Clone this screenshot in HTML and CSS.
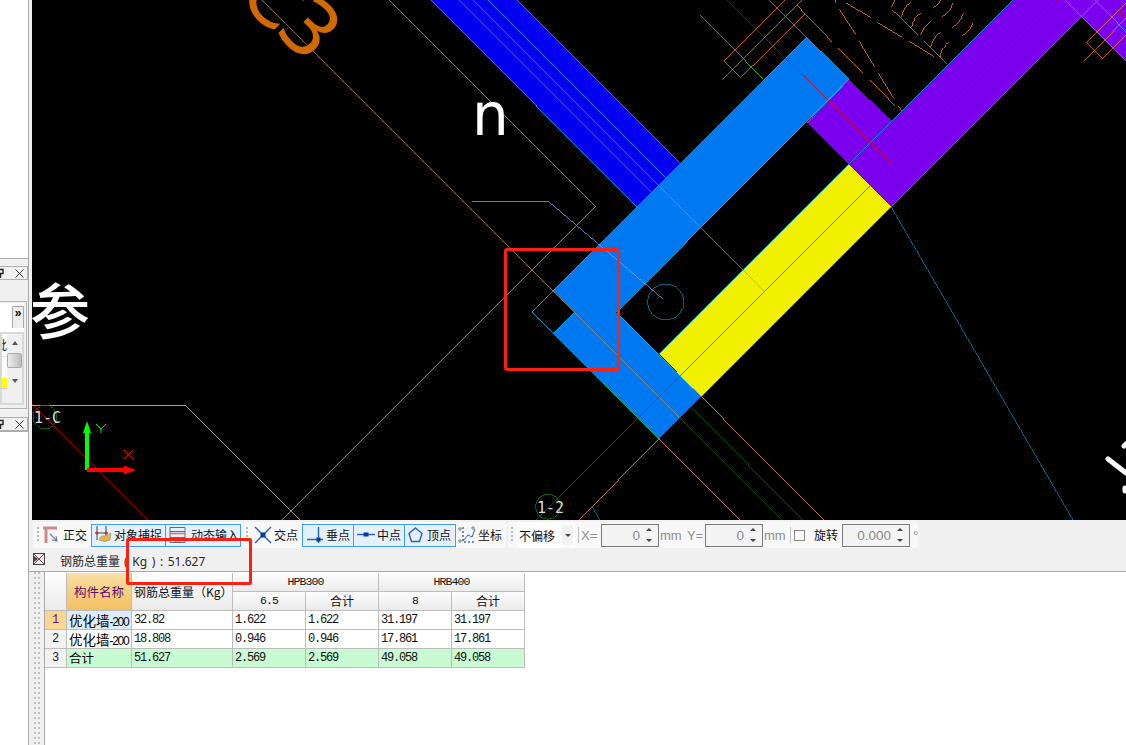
FILE: index.html
```html
<!DOCTYPE html>
<html lang="zh">
<head>
<meta charset="utf-8">
<title>钢筋总重量</title>
<link rel="stylesheet" href="styles.css">
</head>
<body>
<div class="app">
  <aside class="dock">
    <div class="pane-top"></div>
    <div class="dock-title first">
      <svg class="pin" width="6" height="10" viewBox="0 0 6 10"><path class="pin-s" d="M0 1.5H5V5.5H0M2.5 5.5V10M0 5.5H5"/></svg>
      <svg class="close" width="9" height="9" viewBox="0 0 9 9"><path class="close-s" d="M.5.5L8.5 8.5M8.5.5L.5 8.5"/></svg>
    </div>
    <div class="props">
      <div class="props-head"><div class="more">»</div></div>
      <div class="props-body">
        <div class="cells">
          <div class="cell cell-text">批</div>
          <div class="cell cell-blank"></div>
          <div class="cell cell-yellow"></div>
          <div class="cell cell-grey"></div>
        </div>
        <div class="scroll">
          <span class="arrow-up"></span>
          <span class="thumb"></span>
          <span class="arrow-down"></span>
        </div>
      </div>
    </div>
    <div class="dock-title second">
      <svg class="pin" width="6" height="10" viewBox="0 0 6 10"><path class="pin-s" d="M0 1.5H5V5.5H0M2.5 5.5V10M0 5.5H5"/></svg>
      <svg class="close" width="9" height="9" viewBox="0 0 9 9"><path class="close-s" d="M.5.5L8.5 8.5M8.5.5L.5 8.5"/></svg>
    </div>
    <div class="pane-bottom"></div>
  </aside>

  <main class="work">
    <svg class="canvas" width="1094" height="520" viewBox="32 0 1094 520">
      <g class="crisp">
        <polygon class="f-blue" points="431,0 516.7,0 680.4,163.6 637,207"/>
        <polygon class="f-azure" points="806.7,37.3 849,79.3 616.5,312.5 701.3,396.7 659,439 553.3,333.3 574.5,312 553.3,290.7"/>
        <polygon class="f-yellow" points="849,164.3 891,206.7 701.3,396.7 659.3,354"/>
        <polygon class="f-purple" points="849,79.3 891.3,121 849,164 807,122.7"/>
        <polygon class="f-purple" points="849,164 1013,0 1126,0 1126,60.7 1081,16.7 891,206.7"/>

        <path class="l-cyan" d="M431 0L637 207M458.7 0L651.4 192.7M488.3 0L666.2 177.9M516.7 0L680.4 163.6M769 0L806.7 37.3 849 79.3 620 308.6M806.7 37.3L553.3 290.7 532 312 553.3 333.3 603 383M574.5 312L553.3 333.3M620 316.5L701.3 396.7M659.3 354L1013 0M701.3 396.7L891 206.7 1098 0M849 79.3L807 122.7M1065 0L1126 60.7M1095 0L1126 31.7"/>
        <path class="l-green" d="M700 15L763.3 79"/>
        <path class="l-brightgreen" d="M603 383L659 439"/>
        <path class="l-red" d="M1056.5 0L536 520M726.7 0L891.7 163.3M32 404L148 520M1106.7 0L1126 18"/>
        <path class="l-pink" d="M389.3 0L595.7 206.7 280 522M701.3 396.7L824 520M659 439L739.6 520M659 439L579 520"/>
        <path class="l-pale" d="M185 405L300 520"/>
        <path class="l-magenta" d="M32 405H185"/>
        <path class="l-tan" d="M261.7 0L553.3 291.7"/>
        <path class="l-bronze" d="M553.3 291.7L679.8 418.3M473.3 0L765 292"/>
        <path class="l-darkgreen" d="M679.8 418.3L782 520M692 408L803 520"/>
        <path class="l-teal" d="M891 206.7L1073 520M592 506L599.5 520"/>
        <path class="l-peri" d="M472 201.3H548.3L663.3 299.3"/>

        <g class="hatch">
          <path d="M722.3 80L802 0M740.7 77.7L805 14M724 61L785 0M724 61L740.7 77.7M796.7 5L832 41.7"/>
          <path d="M835 0L835.7 2.7M845.7 2.7L870.7 17.3M839.3 9.3L855.7 34.3M877.3 22.3L902.3 37.3M859.3 41.3L874.3 66.7M909.3 41.3L934.3 56.7M838.3 48.3L863.3 73.3M878.3 73.3L893.7 98.3M870 80L895 105.7M898.3 105.7L901.7 111M891.7 9.3L918.3 35M924 41.3L947 64"/>
          <path d="M891.7 7.3Q893 3 895 0M901.7 16.7Q903.3 6.7 910.7 2.7M911.7 27.3Q913.3 16.7 920.7 13.3M920.7 35Q923.3 26.7 930.7 21.7M930.7 47.3Q933.3 36.7 940.7 32.3M940 56.7Q941.7 46.7 949.3 41.7M933.3 7.3Q938.3 6 940.7 0M942.3 16.7Q950 13.3 952.7 3.3M952.3 27.3Q960 23.3 963.3 13.3M962.3 35.7Q970 31.7 972.7 23.3"/>
          <path d="M1086.7 42.3L1102.7 58.7M1084.3 60.7L1126 18.3M1086.7 42.3L1126 2.7M1102.7 58.7L1126 35.3"/>
        </g>
        <circle class="ring-teal" cx="665.7" cy="302" r="18"/>
        <circle class="ring-green" cx="45" cy="417" r="12"/>
        <circle class="ring-green" cx="548" cy="506.7" r="12.5"/>
      </g>

      <rect class="marker" x="505.5" y="249.5" width="113" height="120" rx="2"/>

      <text class="t-big-c" transform="translate(236 -3) rotate(45)">C</text>
      <text class="t-big-c" transform="translate(273 30) rotate(45)">3</text>
      <text class="t-n" x="472" y="135">n</text>
      <text class="t-can" x="30" y="334">参</text>
      <text class="t-axis" x="34" y="423">1-C</text>
      <text class="t-axis" x="537" y="513">1-2</text>

      <path class="l-white-thick" d="M1108 459L1126 473M1124 446L1126 444M1125 491V488"/>

      <path class="a-green" d="M87 470V432"/>
      <polygon class="a-green-f" points="87,421 91,433 83,433"/>
      <path class="a-red" d="M87 470H126"/>
      <polygon class="a-red-f" points="136,470 124,465.5 124,474.5"/>
      <path class="a-y" d="M96 424L101 429 106 424M101 429V433"/>
      <path class="a-x" d="M124 450L133 459M133 450L124 459"/>
    </svg>

    <div class="toolbar">
      <div class="seg seg-one">
        <span class="grip"></span>
        <svg class="ico ico-ortho" width="17" height="18" viewBox="0 0 17 18"><path class="i-rose" d="M0 2H14M3 2V17"/><path class="i-gray" d="M7 8L14 15M9 14L14 15 13 10"/></svg>
        <span class="lbl">正交</span>
        <button class="tbtn snap" type="button">
          <svg width="17" height="18" viewBox="0 0 17 18"><path class="i-dark" d="M2 0V14M11 0V14M0 7H13"/><circle class="i-redfill" cx="2" cy="7" r="1.5"/><circle class="i-redfill" cx="11" cy="7" r="1.5"/><path class="i-hand" d="M4 14Q5 9 10 10L16 7 15 14Q10 17 4 14Z"/></svg>
          <span class="lbl">对象捕捉</span>
        </button>
        <button class="tbtn dyn" type="button">
          <svg width="17" height="18" viewBox="0 0 17 18"><path class="i-slate" d="M1 1.5H16V16.5H1ZM1 5.5H16M1 11.5H16"/><path class="i-red-l" d="M1 7.5H16"/><path class="i-dark" d="M7 12.5V16M10 12.5V16"/></svg>
          <span class="lbl">动态输入</span>
        </button>
      </div>
      <div class="seg seg-two">
        <span class="grip"></span>
        <svg class="ico ico-cross" width="18" height="18" viewBox="0 0 18 18"><path class="i-blue" d="M1 1L17 17M17 1L1 17"/><rect class="i-navy" x="6.500" y="6.500" width="5" height="5"/></svg>
        <span class="lbl lbl-cross">交点</span>
        <button class="tbtn t-perp" type="button">
          <svg width="18" height="18" viewBox="0 0 18 18"><path class="i-blue" d="M1 13.500H17M12.500 1V17"/><rect class="i-navy" x="10.500" y="11.500" width="4" height="4"/></svg>
          <span class="lbl">垂点</span>
        </button>
        <button class="tbtn t-mid" type="button">
          <svg width="18" height="18" viewBox="0 0 18 18"><path class="i-blue" d="M0 8.500H18"/><rect class="i-navy" x="6.500" y="6.500" width="5" height="4"/></svg>
          <span class="lbl">中点</span>
        </button>
        <button class="tbtn t-top" type="button">
          <svg width="15" height="16" viewBox="0 0 15 16"><path class="i-blue" d="M7.500 1L14 6.500 11.500 14.500H3.500L1 6.500Z"/></svg>
          <span class="lbl">顶点</span>
        </button>
        <svg class="ico ico-coord" width="18" height="18" viewBox="0 0 18 18"><path class="i-dots" d="M5 1V16H18"/><path class="i-blue-thin" d="M5 15L10 9 14 11 17 3"/><circle class="i-ring" cx="2" cy="3" r="1.200"/><circle class="i-ring" cx="15" cy="2" r="1.200"/><circle class="i-ring" cx="2" cy="15" r="1.200"/></svg>
        <span class="lbl">坐标</span>
      </div>
      <div class="seg seg-three">
        <span class="grip"></span>
        <div class="select"><span class="select-val">不偏移</span><span class="select-btn"><i class="tri-down"></i></span></div>
        <span class="sep"></span>
        <span class="dim x-label">X=</span>
        <div class="spin"><span class="val">0</span><span class="spin-arrows"><i class="tri-up"></i><i class="tri-down"></i></span></div>
        <span class="dim unit">mm</span>
        <span class="dim y-label">Y=</span>
        <div class="spin"><span class="val">0</span><span class="spin-arrows"><i class="tri-up"></i><i class="tri-down"></i></span></div>
        <span class="dim unit">mm</span>
        <span class="sep sep-two"></span>
        <span class="check"></span>
        <span class="lbl rot-label">旋转</span>
        <div class="spin spin-wide"><span class="val">0.000</span><span class="spin-arrows"><i class="tri-up"></i><i class="tri-down"></i></span></div>
        <span class="dim degree">°</span>
      </div>
    </div>

    <div class="summary">
      <svg class="sum-ico" width="12" height="12" viewBox="0 0 12 12"><rect class="sum-box" x=".5" y=".5" width="11" height="11"/><path class="sum-x" d="M1 1L11 11M11 1L1 11"/><path class="sum-tri" d="M1 3L5 6 1 9Z"/></svg>
      <span class="sum-text">钢筋总重量<span class="sum-latin">( Kg ) : 51.627</span></span>
    </div>

    <div class="grid-area">
      <div class="gripper"><span class="dots"></span><span class="dots"></span></div>
      <table class="sheet">
        <colgroup>
          <col class="c-n"><col class="c-name"><col class="c-total"><col class="c-v"><col class="c-v"><col class="c-v"><col class="c-v">
        </colgroup>
        <thead>
          <tr>
            <th rowspan="2" class="head"></th>
            <th rowspan="2" class="head-name">构件名称</th>
            <th rowspan="2" class="head head-total">钢筋总重量（Kg）</th>
            <th colspan="2" class="head mono">HPB300</th>
            <th colspan="2" class="head mono">HRB400</th>
          </tr>
          <tr>
            <th class="head mono">6.5</th>
            <th class="head">合计</th>
            <th class="head mono">8</th>
            <th class="head">合计</th>
          </tr>
        </thead>
        <tbody>
          <tr>
            <td class="rn rn-active">1</td><td class="name name-active">优化墙<span class="suffix">-200</span></td>
            <td class="num">32.82</td><td class="num">1.622</td><td class="num">1.622</td><td class="num">31.197</td><td class="num">31.197</td>
          </tr>
          <tr>
            <td class="rn">2</td><td class="name">优化墙<span class="suffix">-200</span></td>
            <td class="num">18.808</td><td class="num">0.946</td><td class="num">0.946</td><td class="num">17.861</td><td class="num">17.861</td>
          </tr>
          <tr class="total">
            <td class="rn">3</td><td class="name name-sum">合计</td>
            <td class="num">51.627</td><td class="num">2.569</td><td class="num">2.569</td><td class="num">49.058</td><td class="num">49.058</td>
          </tr>
        </tbody>
      </table>
    </div>
    <div class="marker-box"></div>
  </main>
</div>
</body>
</html>
```
FILE: styles.css
```css
* { box-sizing: border-box; }
html, body { margin: 0; padding: 0; }
body {
  width: 1126px;
  height: 745px;
  overflow: hidden;
  background: #fff;
  font-family: "Noto Sans CJK SC", "Liberation Sans", sans-serif;
  font-size: 12px;
  color: #000;
}
.app { display: flex; width: 1126px; height: 745px; }

/* left dock */
.dock {
  width: 29px;
  flex: none;
  display: flex;
  flex-direction: column;
  background: #f0f0f0;
  border-right: 1px solid #a8a8a8;
  overflow: hidden;
}
.pane-top { height: 259px; flex: none; background: #fff; border-bottom: 1px solid #aaa; }
.dock-title {
  height: 14px;
  flex: none;
  display: flex;
  align-items: center;
  border: 1px solid #b0b0b0;
  border-left: 0;
  margin-right: 0;
  background: #f0f0f0;
}
.dock-title.first { margin-top: 7px; }
.dock-title.second { margin-top: 8px; }
.pin { margin-left: -2px; }
.pin-s { fill: none; stroke: #222; stroke-width: 1.4; }
.close { margin-left: 11px; }
.close-s { fill: none; stroke: #333; stroke-width: 1; }
.pane-bottom { flex: 1; background: #fff; border-top: 1px solid #aaa; }

.props {
  height: 108px;
  flex: none;
  margin-top: 21px;
  margin-right: 1px;
  padding: 1px 2px 3px 0;
  background: #f0f0f0;
  border: 1px solid #b4b4b4;
  border-left: 0;
  display: flex;
  flex-direction: column;
}
.props-head { height: 29px; flex: none; background: #fff; display: flex; justify-content: flex-end; padding-top: 3px; }
.more {
  width: 12px;
  height: 22px;
  background: #eee;
  border: 1px solid #aaa;
  border-bottom-width: 0;
  font: bold 12px/12px "Liberation Sans", sans-serif;
  text-align: center;
}
.props-body { flex: 1; display: flex; border: 2px solid #d8d8d8; background: #fff; }
.cells { width: 5px; flex: none; display: flex; flex-direction: column; }
.cell { flex: none; overflow: hidden; }
.cell-text { height: 22px; line-height: 22px; font-size: 12px; direction: rtl; color: #222; }
.cell-blank { height: 22px; background: #fff; border-top: 1px solid #ddd; }
.cell-yellow { height: 10px; background: #ffff00; }
.cell-grey { flex: 1; background: #eee; border-top: 1px solid #ccc; }
.scroll { flex: 1; background: #f0f0f0; display: flex; flex-direction: column; align-items: center; padding-top: 7px; }
.arrow-up { width: 0; height: 0; border: 3.5px solid transparent; border-top: 0; border-bottom: 4px solid #555; }
.thumb {
  width: 15px;
  height: 15px;
  margin-top: 8px;
  background: linear-gradient(90deg, #eee, #bbb);
  border: 1px solid #aaa;
  border-radius: 2px;
}
.arrow-down { width: 0; height: 0; margin-top: 11px; border: 3.5px solid transparent; border-bottom: 0; border-top: 4px solid #555; }

/* main column */
.work { flex: 1; min-width: 0; position: relative; display: flex; flex-direction: column; background: #f0f0f0; }
.canvas { display: block; flex: none; margin-left: 3px; background: #000; }
.crisp { shape-rendering: crispEdges; fill: none; }
.f-blue { fill: #0000ee; }
.f-azure { fill: #0078f0; }
.f-yellow { fill: #f0f000; }
.f-purple { fill: #7a00ee; }
.l-cyan { fill: none; stroke: #00c8ff; stroke-width: .75; }
.l-green { fill: none; stroke: #40e040; stroke-width: .75; }
.l-brightgreen { fill: none; stroke: #30f060; stroke-width: .75; }
.l-red { fill: none; stroke: #e80000; stroke-width: .75; }
.l-pink { fill: none; stroke: #ff9898; stroke-width: .75; }
.l-pale { fill: none; stroke: #e8d0d0; stroke-width: .75; }
.l-magenta { fill: none; stroke: #ff66ee; stroke-width: 1; }
.l-tan { fill: none; stroke: #b89a58; stroke-width: .75; }
.l-bronze { fill: none; stroke: #c48a40; stroke-width: .75; }
.l-darkgreen { fill: none; stroke: #0a6a1a; stroke-width: .75; }
.l-teal { fill: none; stroke: #0088c0; stroke-width: .75; }
.l-peri { fill: none; stroke: #90a0f8; stroke-width: .75; }
.hatch path { fill: none; stroke: #ff8a10; stroke-width: .75; }
.ring-teal { fill: none; stroke: #007a9c; stroke-width: .8; }
.ring-green { fill: none; stroke: #0a7a0a; stroke-width: .8; }
.marker { fill: none; stroke: #ff2014; stroke-width: 3; }
.t-big-c { font-family: "DejaVu Sans", sans-serif; font-size: 78px; fill: #d06a00; }
.t-n { font-family: "DejaVu Sans", sans-serif; font-size: 58px; fill: #fff; }
.t-can { font-family: "Noto Sans CJK SC", sans-serif; font-size: 60px; font-weight: 500; fill: #fff; }
.t-axis { font-family: "DejaVu Sans Mono", monospace; font-size: 15px; fill: #ddd; }
.l-white-thick { fill: none; stroke: #fff; stroke-width: 5; stroke-linecap: round; }
.a-green { fill: none; stroke: #00ff00; stroke-width: 4; }
.a-green-f { fill: #00ff00; }
.a-red { fill: none; stroke: #ff0000; stroke-width: 4; }
.a-red-f { fill: #ff0000; }
.a-y { fill: none; stroke: #00ee00; stroke-width: 1; }
.a-x { fill: none; stroke: #ee0000; stroke-width: 1; }

/* toolbar */
.toolbar { height: 30px; flex: none; display: flex; padding: 2px 0 2px 4px; align-items: stretch; }
.seg { display: flex; align-items: center; background: #f8f8f8; border-radius: 3px; }
.seg-one { width: 210px; padding-left: 4px; }
.seg-two { width: 262px; margin-left: 1px; padding-left: 2px; }
.seg-three { width: 410px; margin-left: 2px; padding-left: 3px; }
.grip {
  width: 2px;
  height: 16px;
  flex: none;
  background: repeating-linear-gradient(#b8b8b8 0 2px, transparent 2px 4px);
}
.ico { flex: none; display: block; }
.ico-ortho { margin-left: 4px; }
.ico-cross { margin-left: 6px; }
.ico-coord { margin-left: 2px; }
.lbl { flex: none; font-size: 12px; line-height: 16px; color: #111; margin-left: 2px; white-space: nowrap; }
.seg-one > .lbl { margin-left: 3px; margin-right: 4px; }
.seg-two > .lbl { margin-left: 2px; }
.seg-two > .lbl-cross { margin-right: 4px; }
.tbtn {
  width: 75px;
  height: 23px;
  flex: none;
  display: flex;
  align-items: center;
  padding: 0 0 0 3px;
  margin: 0;
  font: inherit;
  background: #e4f1fd;
  border: 1px solid #3f9bf0;
  color: #111;
}
.dyn, .t-mid, .t-top { margin-left: -1px; }
.dyn { width: 76px; }
.t-perp, .t-mid, .t-top { width: 52px; }
.t-perp .lbl, .t-mid .lbl { margin-left: 2px; }
.t-top .lbl { margin-left: 4px; }
.snap .lbl { margin-left: 2px; }
.dyn .lbl { margin-left: 5px; }
.i-rose { fill: none; stroke: #cc8a8a; stroke-width: 3; }
.i-gray { fill: none; stroke: #708090; stroke-width: 1.200; }
.i-dark { fill: none; stroke: #444; stroke-width: 1; }
.i-redfill { fill: #c83020; }
.i-hand { fill: #d8b860; stroke: #a08020; stroke-width: .5; }
.i-slate { fill: none; stroke: #667; stroke-width: 1; }
.i-red-l { fill: none; stroke: #d87070; stroke-width: 1.500; }
.i-blue { fill: none; stroke: #2a62b8; stroke-width: 1.400; }
.i-navy { fill: #0a3aa8; }
.i-dots { fill: none; stroke: #3a6ab8; stroke-width: 1.500; stroke-dasharray: 2 2; }
.i-blue-thin { fill: none; stroke: #2a62b8; stroke-width: 1; }
.i-ring { fill: #fff; stroke: #555; stroke-width: .8; }

.select {
  width: 58px;
  height: 26px;
  flex: none;
  margin-left: 4px;
  display: flex;
  align-items: center;
  background: #fff;
  padding: 0 2px 0 2px;
}
.select-val { flex: 1; font-size: 12px; color: #111; }
.select-btn { width: 11px; height: 20px; background: #f2f2f2; display: flex; align-items: center; justify-content: center; }
.sep { width: 1px; height: 16px; flex: none; margin-left: 3px; background: #c0c0c0; }
.dim { flex: none; font: 13px "Liberation Sans", sans-serif; color: #8c8c8c; }
.x-label { margin-left: 2px; width: 20px; }
.unit { margin-left: 1px; width: 22px; }
.y-label { margin-left: 5px; width: 18px; }
.spin {
  width: 58px;
  height: 23px;
  flex: none;
  display: flex;
  align-items: center;
  justify-content: flex-end;
  background: #f4f4f4;
  border: 1px solid #7a7a7a;
}
.val { font: 13.500px "Liberation Sans", sans-serif; color: #8b8b8b; }
.spin-arrows { width: 18px; height: 18px; flex: none; display: flex; flex-direction: column; align-items: center; justify-content: space-between; padding: 2px 0; }
.tri-up { display: block; width: 0; height: 0; border: 3px solid transparent; border-top: 0; border-bottom: 3.500px solid #444; }
.tri-down { display: block; width: 0; height: 0; border: 3px solid transparent; border-bottom: 0; border-top: 3.500px solid #444; }
.sep-two { margin-left: 4px; }
.check { width: 11px; height: 11px; flex: none; margin-left: 3px; border: 1px solid #8a8a8a; background: #fafafa; }
.rot-label { margin-left: 9px; width: 28px; }
.spin-wide { width: 68px; margin-left: 0; }
.degree { margin-left: 3px; }

/* summary */
.summary { height: 22px; flex: none; display: flex; align-items: center; padding-left: 4px; border-bottom: 1px solid #a8a8a8; }
.sum-ico { flex: none; margin-top: -3px; }
.sum-box { fill: #f4e8e8; stroke: #444; }
.sum-x { fill: none; stroke: #555; stroke-width: 1; }
.sum-tri { fill: #444; }
.sum-text { margin-left: 15px; font-size: 12px; color: #2a2a2a; white-space: nowrap; }
.sum-latin { margin-left: 4px; font: 12px "Noto Sans", sans-serif; word-spacing: 1.500px; }

/* grid area */
.grid-area { flex: 1; min-height: 0; display: flex; background: #fff; align-items: flex-start; }
.gripper {
  width: 16px;
  flex: none;
  align-self: stretch;
  display: flex;
  gap: 2px;
  padding-left: 5px;
  background: #f0f0f0;
  border-right: 1px solid #a8a8a8;
}
.dots { width: 2px; background: repeating-linear-gradient(#c0c0c0 0 2px, transparent 2px 5px); }
.sheet { table-layout: fixed; width: 480px; margin-top: 1px; border-collapse: separate; border-spacing: 0; }
.c-n { width: 22px; }
.c-name { width: 65px; }
.c-total { width: 101px; }
.c-v { width: 73px; }
.sheet th, .sheet td {
  height: 19px;
  padding: 0;
  border-right: 1px solid #bdbdbd;
  border-bottom: 1px solid #bdbdbd;
  font-weight: 400;
  overflow: hidden;
  white-space: nowrap;
  line-height: 18px;
}
.sheet thead th { border-top: 0; }
.head { background: linear-gradient(#fdfdfd, #ebebeb); text-align: center; font-size: 12px; color: #111; }
.head-total { text-align: left; padding-left: 2px !important; }
.head-name { background: linear-gradient(#fbdfa6, #f2c062); text-align: center; font-size: 12.500px; color: #5e0a6e; }
.mono { font: 11.500px/18px "Liberation Mono", monospace !important; letter-spacing: -.9px; }
.rn { background: #f2f2f2; text-align: center; font: 12px "Liberation Mono", monospace; color: #222; }
.rn-active { background: #fbd68e; color: #70107a; }
.name { padding-left: 2px !important; font-size: 13.500px; color: #000; background: #fff; }
.name-sum { font-size: 12.500px; }
.name-active { background: #ddecfb; }
.suffix { font: 12px "Liberation Sans", sans-serif; letter-spacing: -1.300px; }
.num { padding-left: 2px !important; font: 12px/18px "Liberation Mono", monospace; letter-spacing: -1.2px; color: #111; background: #fff; }
.total td { background: #c8fbd2; }
.total .rn { background: #f2f2f2; }

/* annotation over the panel */
.marker-box {
  position: absolute;
  left: 97px;
  top: 538px;
  width: 126px;
  height: 47px;
  border: 3px solid #ff2014;
  border-radius: 2px;
}
```
